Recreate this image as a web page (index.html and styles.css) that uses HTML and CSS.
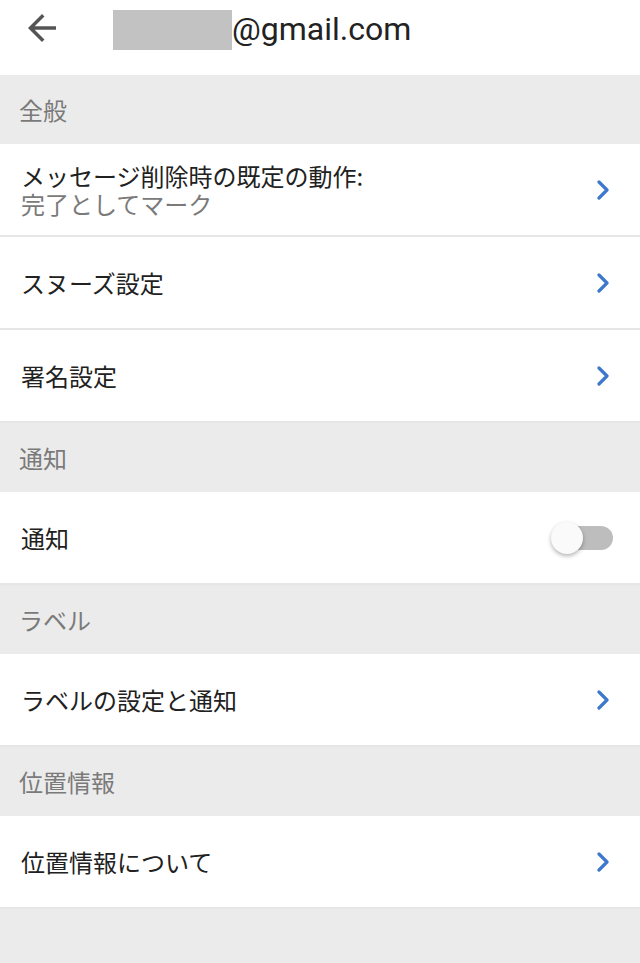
FILE: index.html
```html
<!DOCTYPE html>
<html lang="ja">
<head>
  <meta charset="UTF-8" />
  <meta name="viewport" content="width=device-width, initial-scale=1" />
  <title>設定</title>
  <link rel="stylesheet" href="styles.css">
</head>
<body>
  <header class="toolbar">
    <svg class="back-icon" viewBox="0 0 24 24" width="42" height="42">
      <path d="M20 11H7.83l5.59-5.59L12 4l-8 8 8 8 1.41-1.41L7.83 13H20v-2z" />
    </svg>
    <div class="account">
      <span class="redacted"></span>
      <span class="account-domain">@gmail.com</span>
    </div>
  </header>

  <div class="section">全般</div>
  <div class="row">
    <div class="row-text">
      <div class="row-title">メッセージ削除時の既定の動作:</div>
      <div class="row-sub">完了としてマーク</div>
    </div>
    <svg class="chevron" viewBox="0 0 12 20" width="12" height="20">
      <polyline points="2,2 10,10 2,18" />
    </svg>
  </div>
  <div class="row">
    <div class="row-title">スヌーズ設定</div>
    <svg class="chevron" viewBox="0 0 12 20" width="12" height="20">
      <polyline points="2,2 10,10 2,18" />
    </svg>
  </div>
  <div class="row">
    <div class="row-title">署名設定</div>
    <svg class="chevron" viewBox="0 0 12 20" width="12" height="20">
      <polyline points="2,2 10,10 2,18" />
    </svg>
  </div>

  <div class="section">通知</div>
  <div class="row row-switch">
    <div class="row-title">通知</div>
    <div class="switch">
      <span class="switch-track"></span>
      <span class="switch-thumb"></span>
    </div>
  </div>

  <div class="section">ラベル</div>
  <div class="row">
    <div class="row-title">ラベルの設定と通知</div>
    <svg class="chevron" viewBox="0 0 12 20" width="12" height="20">
      <polyline points="2,2 10,10 2,18" />
    </svg>
  </div>

  <div class="section">位置情報</div>
  <div class="row">
    <div class="row-title">位置情報について</div>
    <svg class="chevron" viewBox="0 0 12 20" width="12" height="20">
      <polyline points="2,2 10,10 2,18" />
    </svg>
  </div>
</body>
</html>
```

FILE: styles.css
```css
* {
  margin: 0;
  padding: 0;
  box-sizing: border-box;
}

body {
  font-family: "Noto Sans CJK JP", "Noto Sans", sans-serif;
  background: #ebebeb;
  min-height: 100vh;
  color: #212121;
}

/* Barra superior */
.toolbar {
  height: 75px;
  background: #ffffff;
  display: flex;
  align-items: flex-start;
  padding: 7px 0 0 21px;
}

.back-icon {
  fill: #555555;
  flex-shrink: 0;
}

.account {
  display: flex;
  align-items: center;
  margin: 3px 0 0 50px;
  height: 40px;
}

.redacted {
  display: block;
  width: 119px;
  height: 40px;
  background: #c2c2c2;
}

.account-domain {
  font-family: Roboto, "Liberation Sans", sans-serif;
  font-size: 32px;
  line-height: 40px;
  color: #222222;
  position: relative;
  top: -1px;
}

/* Cabeceras de sección */
.section {
  height: 69px;
  display: flex;
  align-items: center;
  padding-left: 19px;
  font-size: 24px;
  color: #7a7a7a;
  background: #ebebeb;
}

/* Filas */
.row {
  height: 93px;
  background: #ffffff;
  border-bottom: 2px solid #e6e6e6;
  display: flex;
  align-items: center;
  justify-content: space-between;
  padding: 0 31px 0 21px;
}

.row-title {
  font-size: 24px;
  line-height: 28px;
  color: #212121;
}

.row-sub {
  font-size: 24px;
  line-height: 28px;
  color: #7a7a7a;
}

.chevron {
  fill: none;
  stroke: #3d78cc;
  stroke-width: 3.2;
  stroke-linecap: round;
  stroke-linejoin: round;
  flex-shrink: 0;
}

.row-switch {
  padding-right: 27px;
}

.switch {
  position: relative;
  width: 62px;
  height: 34px;
}

.switch-track {
  position: absolute;
  right: 0;
  top: 5px;
  width: 46px;
  height: 24px;
  border-radius: 12px;
  background: #bdbdbd;
}

.switch-thumb {
  position: absolute;
  left: 0;
  top: 1px;
  width: 32px;
  height: 32px;
  border-radius: 50%;
  background: #fafafa;
  box-shadow: 0 2px 4px rgba(0, 0, 0, 0.3);
}
```
